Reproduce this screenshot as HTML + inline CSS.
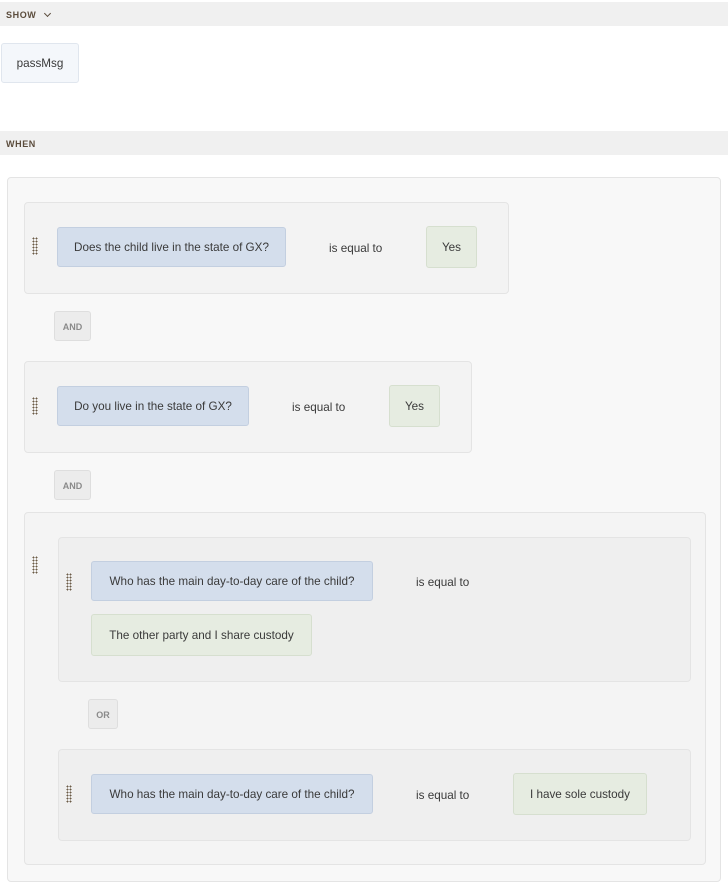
<!DOCTYPE html>
<html><head><meta charset="utf-8"><style>
*{box-sizing:border-box;margin:0;padding:0}
body{width:728px;height:886px;background:#fff;font-family:"Liberation Sans",sans-serif;font-size:11.7px;color:#3a3a3a;position:relative;overflow:hidden}
.a{position:absolute}
.hdr{left:0;width:728px;height:24px;background:#f0f0f0;font-size:9px;font-weight:bold;letter-spacing:.6px;color:#5b4c3c;padding:8px 6px}
.box{border:1px solid #e4e4e4;border-radius:4px}
.chip{display:flex;align-items:center;justify-content:center;border-radius:3px;white-space:nowrap;padding-top:1px}
.q{background:#d4deec;border:1px solid #c3cfe0}
.v{background:#e6ece1;border:1px solid #d6dfcf}
.op{background:#ececec;border:1px solid #dedede;border-radius:3px;font-size:9px;font-weight:bold;color:#8a8a8a;display:flex;align-items:center;justify-content:center;padding-top:1px}
.h{width:6px;height:18px;background-image:radial-gradient(circle,#6a5a45 0.8px,transparent 1px);background-size:3px 3px}
.t{white-space:nowrap}
</style></head><body>
<div class="a hdr" style="top:2px">SHOW <span style="display:inline-block;width:5px;height:5px;border-right:1.6px solid #5b4c3c;border-bottom:1.6px solid #5b4c3c;transform:rotate(45deg);margin:0 0 2px 5px"></span></div>
<div class="a chip" style="left:1px;top:43px;width:78px;height:40px;background:#f4f7fb;border:1px solid #e0e6ee">passMsg</div>
<div class="a hdr" style="top:131px">WHEN</div>

<div class="a box" style="left:7px;top:177px;width:714px;height:705px;background:#f8f8f8"></div>

<div class="a box" style="left:24px;top:202px;width:485px;height:92px;background:#f3f3f3"></div>
<div class="a h" style="left:32px;top:237px"></div>
<div class="a chip q" style="left:57px;top:227px;width:229px;height:40px">Does the child live in the state of GX?</div>
<div class="a t" style="left:329px;top:242px">is equal to</div>
<div class="a chip v" style="left:426px;top:226px;width:51px;height:42px">Yes</div>

<div class="a op" style="left:54px;top:311px;width:37px;height:30px">AND</div>

<div class="a box" style="left:24px;top:361px;width:448px;height:92px;background:#f3f3f3"></div>
<div class="a h" style="left:32px;top:397px"></div>
<div class="a chip q" style="left:57px;top:386px;width:192px;height:40px">Do you live in the state of GX?</div>
<div class="a t" style="left:292px;top:401px">is equal to</div>
<div class="a chip v" style="left:389px;top:385px;width:51px;height:42px">Yes</div>

<div class="a op" style="left:54px;top:470px;width:37px;height:30px">AND</div>

<div class="a box" style="left:24px;top:512px;width:682px;height:353px;background:#f4f4f4"></div>
<div class="a h" style="left:32px;top:556px"></div>

<div class="a box" style="left:58px;top:537px;width:633px;height:145px;background:#efefef"></div>
<div class="a h" style="left:66px;top:573px"></div>
<div class="a chip q" style="left:91px;top:561px;width:282px;height:40px">Who has the main day-to-day care of the child?</div>
<div class="a t" style="left:416px;top:576px">is equal to</div>
<div class="a chip v" style="left:91px;top:614px;width:221px;height:42px">The other party and I share custody</div>

<div class="a op" style="left:88px;top:699px;width:30px;height:30px">OR</div>

<div class="a box" style="left:58px;top:749px;width:633px;height:92px;background:#efefef"></div>
<div class="a h" style="left:66px;top:785px"></div>
<div class="a chip q" style="left:91px;top:774px;width:282px;height:40px">Who has the main day-to-day care of the child?</div>
<div class="a t" style="left:416px;top:789px">is equal to</div>
<div class="a chip v" style="left:513px;top:773px;width:134px;height:42px">I have sole custody</div>
</body></html>
